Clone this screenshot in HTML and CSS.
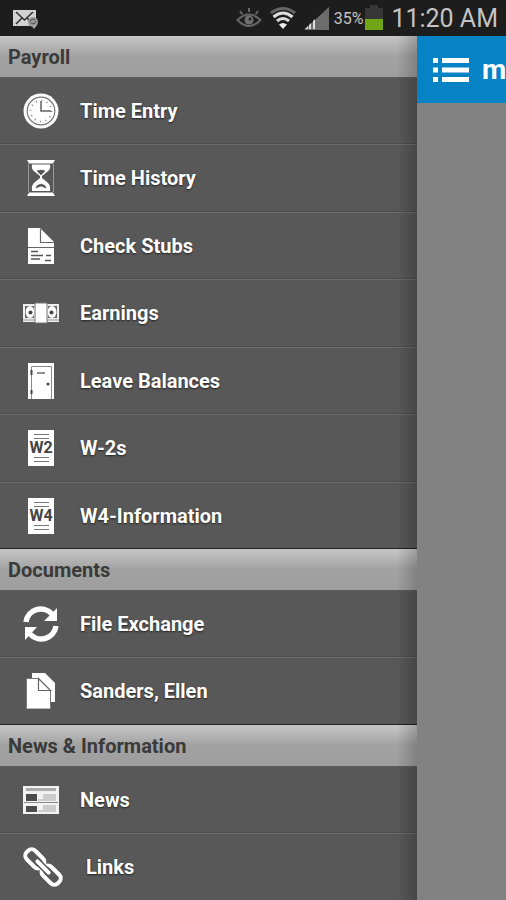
FILE: index.html
```html
<!DOCTYPE html>
<html lang="en">
<head>
<meta charset="utf-8">
<meta name="viewport" content="width=device-width, initial-scale=1">
<title>Payroll menu</title>
<link rel="stylesheet" href="styles.css">
</head>
<body>
<div class="status">
  <svg class="status-mail" width="28" height="22" viewBox="0 0 28 22" aria-hidden="true">
    <rect x="1" y="3" width="23" height="16" fill="#d2d2d2"/>
    <path d="M4 5l8.500 8L21 5M4 17l6-6M15 11l4 4" fill="none" stroke="#333" stroke-width="1.600"/>
    <circle cx="21" cy="15" r="5" fill="#999"/>
    <path d="M18 15a3 3 0 0 1 5-2M24 14a3 3 0 0 1-5 2" fill="none" stroke="#444" stroke-width="1"/>
    <path d="M20 19l2 3 3-4z" fill="#aaa"/>
  </svg>
  <svg class="status-eye" width="26" height="22" viewBox="0 0 26 22" aria-hidden="true">
    <g fill="none" stroke="#666" stroke-width="2">
      <path d="M1.500 13Q13 2 24.500 13Q13 25 1.500 13z"/>
      <path d="M4 4l2.500 3.500M13 1v4M22 4l-2.500 3.500"/>
    </g>
    <circle cx="13" cy="13" r="4.500" fill="#707070"/><circle cx="14" cy="12" r="1.500" fill="#222"/>
  </svg>
  <svg class="status-wifi" width="26" height="24" viewBox="0 0 26 24" aria-hidden="true">
    <path d="M1 7Q13-2 25 7" fill="none" stroke="#666" stroke-width="3"/>
    <path d="M3.500 11Q13 3 22.500 11M7 15Q13 10 19 15" fill="none" stroke="#ddd" stroke-width="3"/>
    <path d="M13 23l-4-4.500q4-3 8 0z" fill="#eee"/>
  </svg>
  <svg class="status-signal" width="26" height="24" viewBox="0 0 26 24" aria-hidden="true">
    <path d="M0 24L25 1v23z" fill="#6c6c6c"/>
    <path d="M1 23l3-3v3zM5 19l2-2v6H5zM9 15l2-2v10H9z" fill="#ddd"/>
  </svg>
  <span class="status-percent">35%</span>
  <svg class="status-battery" width="18" height="26" viewBox="0 0 18 26" aria-hidden="true">
    <path d="M5 0h8v3h5v22H0V3h5z" fill="#373737"/><path d="M0 14h18v11H0z" fill="#72a515"/>
  </svg>
  <time class="status-time" datetime="11:20">11:20 AM</time>
</div>
<div class="screen">
  <nav class="drawer">
    <h2 class="section">Payroll</h2>
    <ul class="menu">
      <li><a class="item" href="#time-entry">
        <svg class="icon" width="36" height="36" viewBox="0 0 36 36" aria-hidden="true">
          <circle cx="18" cy="18" r="17.500" fill="#fff"/>
          <circle cx="18" cy="18" r="13.800" fill="none" stroke="#777" stroke-width="1.200"/>
          <circle cx="18" cy="18" r="10.500" fill="none" stroke="#777" stroke-width="1.600" stroke-dasharray="1 4.500"/>
          <path d="M18 8v10h10" fill="none" stroke="#606060" stroke-width="1.500"/>
        </svg>Time Entry</a></li>
      <li><a class="item" href="#time-history">
        <svg class="icon" width="36" height="36" viewBox="0 0 36 36" aria-hidden="true">
          <path d="M4 0h28l-2 3.500H6zM6 32.500h24L32 36H4z" fill="#fff"/>
          <path d="M5.500 4v28M30.500 4v28" stroke="#999" stroke-width="1"/>
          <path d="M9 4.500h18q1 5-3 7.500l-5 4v2l5 4q4 3 3 9H9q-1-6 3-9l5-4v-2l-5-4Q8 9.500 9 4.500z" fill="#fff"/>
          <path d="M14 11q4-2 8 0l-4 4zM13 28q0-3 5-4 5 1 5 4l-5-2z" fill="#555" stroke="#555" stroke-width=".6"/>
        </svg>Time History</a></li>
      <li><a class="item" href="#check-stubs">
        <svg class="icon" width="36" height="36" viewBox="0 0 36 36" aria-hidden="true">
          <path d="M5 0h12l14 14v22H5z" fill="#fff"/>
          <path d="M17.500 1v13.500H31M5 19.500h26" fill="none" stroke="#666" stroke-width="1.200"/>
          <path d="M8 23.500h7M8 27.500h12M8 31h9M23 27.500h5M22 32.500h6" stroke="#555" stroke-width="1.400"/>
        </svg>Check Stubs</a></li>
      <li><a class="item" href="#earnings">
        <svg class="icon" width="36" height="36" viewBox="0 0 36 36" aria-hidden="true">
          <path d="M0 9h36v18H0z" fill="#eee"/>
          <path d="M2 11h9v12H2zM25 11h9v12h-9z" fill="#666"/>
          <ellipse cx="7" cy="17" rx="4.500" ry="6" fill="#fff"/><ellipse cx="29" cy="17" rx="4.500" ry="6" fill="#fff"/>
          <circle cx="7.500" cy="17.500" r="2" fill="#444"/><circle cx="28.500" cy="17.500" r="2" fill="#444"/>
          <path d="M0 25h36" stroke="#999" stroke-width="1"/>
          <path d="M12 8h12v20H12z" fill="#fff" stroke="#777" stroke-width="1"/>
        </svg>Earnings</a></li>
      <li><a class="item" href="#leave-balances">
        <svg class="icon" width="36" height="36" viewBox="0 0 36 36" aria-hidden="true">
          <path d="M5 0h26v36H5z" fill="#fff"/>
          <path d="M8.500 36V3.500h20V36" fill="none" stroke="#888" stroke-width="1"/>
          <path d="M14 10h8" stroke="#555" stroke-width="1.300"/>
          <path d="M7.500 7h2v5h-2zM7.500 27h2v4h-2z" fill="#444"/><circle cx="25" cy="21" r="1.500" fill="#444"/>
        </svg>Leave Balances</a></li>
      <li><a class="item" href="#w-2s">
        <svg class="icon" width="36" height="36" viewBox="0 0 36 36" aria-hidden="true">
          <path d="M5 0h26v36H5z" fill="#fff"/>
          <path d="M11 4.500h15M11 8.500h15M11 27.500h15M11 31.500h15" stroke="#777" stroke-width="1.200"/>
          <text class="form-code" x="18" y="23" text-anchor="middle">W2</text>
        </svg>W-2s</a></li>
      <li><a class="item" href="#w4-information">
        <svg class="icon" width="36" height="36" viewBox="0 0 36 36" aria-hidden="true">
          <path d="M5 0h26v36H5z" fill="#fff"/>
          <path d="M11 4.500h15M11 8.500h15M11 27.500h15M11 31.500h15" stroke="#777" stroke-width="1.200"/>
          <text class="form-code" x="18" y="23" text-anchor="middle">W4</text>
        </svg>W4-Information</a></li>
    </ul>
    <h2 class="section">Documents</h2>
    <ul class="menu">
      <li><a class="item" href="#file-exchange">
        <svg class="icon" width="36" height="36" viewBox="0 0 36 36" aria-hidden="true">
          <path d="M3 16A15 15 0 0 1 29 8M33 20A15 15 0 0 1 7 28" fill="none" stroke="#fff" stroke-width="5.500"/>
          <path d="M34 2v13H21zM2 34V21h12z" fill="#fff"/>
        </svg>File Exchange</a></li>
      <li><a class="item" href="#sanders-ellen">
        <svg class="icon" width="36" height="36" viewBox="0 0 36 36" aria-hidden="true">
          <path d="M9 0h13l10 10v19H9z" fill="#fff"/>
          <path d="M3.500 5.500h12l12 12V36h-24z" fill="#fff" stroke="#777" stroke-width="1"/>
          <path d="M15.500 5.500v12h12z" fill="#fff" stroke="#666" stroke-width="1.200"/>
        </svg>Sanders, Ellen</a></li>
    </ul>
    <h2 class="section">News &amp; Information</h2>
    <ul class="menu">
      <li><a class="item" href="#news">
        <svg class="icon" width="36" height="36" viewBox="0 0 36 36" aria-hidden="true">
          <path d="M0 4h36v28H0z" fill="#f2f2f2"/>
          <path d="M3 6h30v3H3z" fill="#aaa"/>
          <path d="M3 12h11v7H3zM3 24h11v6H3z" fill="#4b4b4b"/>
          <path d="M20 12h13v7H15v-2h5zM20 23h13v7H15v-2h5z" fill="#ccc"/>
          <path d="M1 20.500h34" stroke="#888" stroke-width="1"/>
        </svg>News</a></li>
      <li><a class="item" href="#links">
        <svg class="icon" width="42" height="40" viewBox="0 0 42 40" aria-hidden="true">
          <g fill="none" stroke="#fff" stroke-width="4" transform="rotate(45 20 20)">
            <rect x="-2" y="14" width="21" height="12" rx="5"/>
            <rect x="21" y="14" width="21" height="12" rx="5"/>
            <path d="M11 20h18" stroke="#585858" stroke-width="7"/>
            <path d="M12 20h16" stroke-linecap="round"/>
          </g>
        </svg>Links</a></li>
    </ul>
  </nav>
  <main class="page">
    <header class="bar">
      <button class="toggle" type="button" aria-label="Menu">
        <svg width="36" height="24" viewBox="0 0 36 24" aria-hidden="true">
          <path d="M0 0h5v5H0zM9 0h27v5H9zM0 9.500h5v5H0zM9 9.500h27v5H9zM0 19h5v5H0zM9 19h27v5H9z" fill="#fff"/>
        </svg>
      </button>
      <span class="brand">m</span>
    </header>
  </main>
</div>
</body>
</html>
```
FILE: styles.css
```css
* {
  box-sizing: border-box;
}

body {
  margin: 0;
  height: 100vh;
  display: flex;
  flex-direction: column;
  overflow: hidden;
  background: #828282;
  font-family: Roboto, "Liberation Sans", sans-serif;
}

svg {
  flex: none;
}

.status {
  flex: none;
  display: flex;
  align-items: center;
  height: 36px;
  padding: 0 8px 0 12px;
  background: #1d1d1d;
  color: #c4c4c4;
}

.status-eye {
  margin-left: auto;
}

.status-wifi {
  margin-left: 8px;
}

.status-signal {
  margin-left: 8px;
}

.status-percent {
  margin-left: 4px;
  font-size: 16px;
}

.status-battery {
  margin-left: 2px;
}

.status-time {
  margin-left: 8px;
  font-size: 25px;
}

.screen {
  flex: 1;
  min-height: 0;
  display: flex;
}

.drawer {
  position: relative;
  flex: none;
  width: calc(100% - 89px);
  overflow: hidden;
  background: #585858;
}

/* Shadow that the page casts on the drawer */
.drawer::after {
  content: "";
  position: absolute;
  inset: 0 0 0 auto;
  width: 20px;
  background: linear-gradient(to right, transparent, rgba(0, 0, 0, 0.2));
  pointer-events: none;
}

.section {
  height: 41px;
  margin: 0;
  padding: 0 8px;
  background: linear-gradient(#c6c6c6, #a2a2a2 50%, #9e9e9e);
  color: #3a3a3a;
  font-size: 20px;
  font-weight: 700;
  line-height: 42px;
}

.menu {
  margin: 0;
  padding: 0;
  list-style: none;
}

.item {
  display: flex;
  align-items: center;
  gap: 21px;
  height: 67px;
  padding: 0 23px;
  border-top: 1px solid #6a6a6a;
  border-bottom: 1px solid #4e4e4e;
  color: #fff;
  font-size: 20px;
  font-weight: 700;
  text-decoration: none;
  text-shadow: 0 1px 2px #222;
}

.menu li:nth-child(even) .item {
  height: 68px;
}

.menu li:first-child .item {
  border-top-color: #5c5c5c;
}

.menu li:last-child .item {
  border-bottom-color: #222;
}

.form-code {
  fill: #444;
  font-size: 16px;
  font-weight: 700;
  text-shadow: none;
}

.page {
  flex: 1;
  min-width: 0;
}

.bar {
  display: flex;
  align-items: center;
  gap: 13px;
  height: 67px;
  padding-left: 16px;
  overflow: hidden;
  background: #0683c4;
}

.toggle {
  flex: none;
  display: flex;
  padding: 0;
  border: 0;
  background: none;
}

.brand {
  color: #fff;
  font-size: 28px;
  font-weight: 700;
}
```
